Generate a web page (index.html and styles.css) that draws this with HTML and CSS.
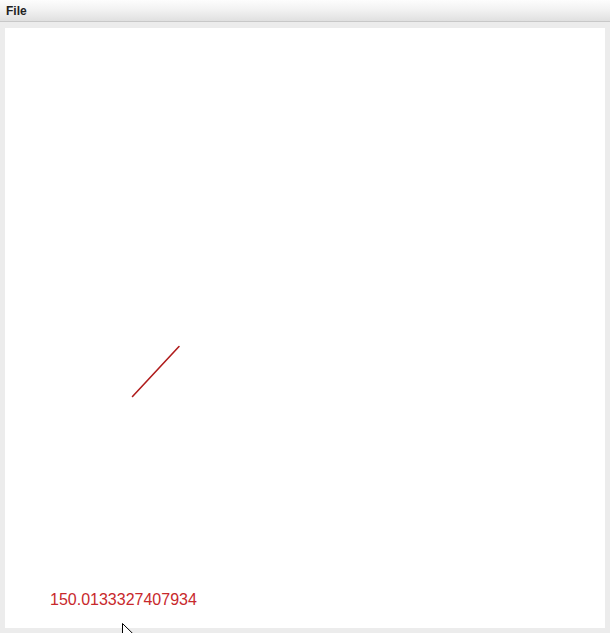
FILE: index.html
```html
<!DOCTYPE html>
<html>
<head>
<meta charset="utf-8">
<link rel="stylesheet" href="styles.css">
</head>
<body>
<div class="menubar"><span class="menu-item">File</span></div>
<div class="content">
  <svg class="canvas" width="600" height="600" viewBox="0 0 600 600">
    <line x1="127.5" y1="368.5" x2="174" y2="318.5" stroke="#b01c1c" stroke-width="1.6" stroke-linecap="round"/>
    <text x="45" y="577" class="readout">150.0133327407934</text>
  </svg>
</div>
<svg class="cursor" width="14" height="20" viewBox="0 0 14 20">
  <path d="M0.5 0.5 L0.5 15 L4 11.5 L6.5 17.5 L8.5 16.5 L6 10.8 L11 10.8 Z" fill="#fff" stroke="#000" stroke-width="1"/>
</svg>
</body>
</html>
```
FILE: styles.css
```css
html, body {
  margin: 0;
  padding: 0;
}
body {
  background: #ececec;
  width: 610px;
  height: 633px;
  overflow: hidden;
  position: relative;
  font-family: "Liberation Sans", Arial, sans-serif;
}
.menubar {
  height: 21px;
  border-bottom: 1px solid #c8c8c8;
  background: linear-gradient(to bottom, #fdfdfd 0%, #f1f1f1 50%, #e0e0e0 100%);
  display: flex;
  align-items: center;
  padding-left: 6px;
  box-sizing: content-box;
}
.menu-item {
  font-size: 12px;
  font-weight: bold;
  color: #222;
}
.content {
  padding: 6px 5px 5px 5px;
}
.canvas {
  display: block;
  background: #fff;
}
.readout {
  font-family: "Liberation Sans", Arial, sans-serif;
  font-size: 16px;
  fill: #c8282c;
}
.cursor {
  position: absolute;
  left: 122px;
  top: 623px;
}
```
